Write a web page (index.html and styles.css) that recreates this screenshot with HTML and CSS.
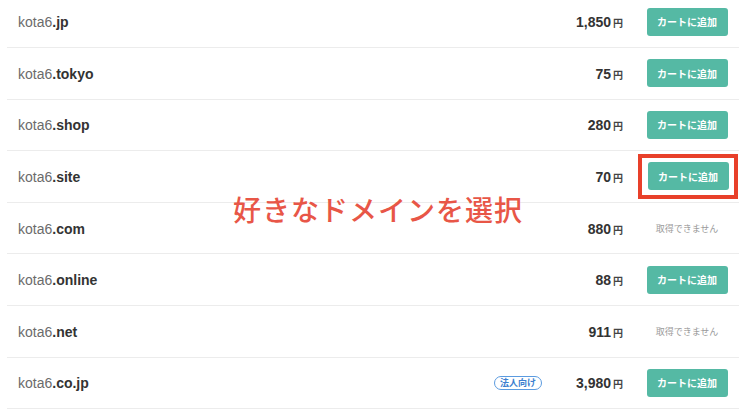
FILE: index.html
```html
<!DOCTYPE html>
<html lang="ja">
<head>
    <meta charset="UTF-8">
    <meta name="viewport" content="width=device-width, initial-scale=1.0">
    <title>ドメイン検索結果</title>
    <link rel="stylesheet" href="styles.css">
</head>
<body>
    <div class="result-list">
        <div class="row">
            <div class="domain">kota6<b>.jp</b></div>
            <div class="price">1,850<span class="yen">円</span></div>
            <div class="action"><button class="cart-btn">カートに追加</button></div>
        </div>
        <div class="row">
            <div class="domain">kota6<b>.tokyo</b></div>
            <div class="price">75<span class="yen">円</span></div>
            <div class="action"><button class="cart-btn">カートに追加</button></div>
        </div>
        <div class="row">
            <div class="domain">kota6<b>.shop</b></div>
            <div class="price">280<span class="yen">円</span></div>
            <div class="action"><button class="cart-btn">カートに追加</button></div>
        </div>
        <div class="row">
            <div class="domain">kota6<b>.site</b></div>
            <div class="price">70<span class="yen">円</span></div>
            <div class="action highlight"><button class="cart-btn">カートに追加</button></div>
        </div>
        <div class="row">
            <div class="domain">kota6<b>.com</b></div>
            <div class="price">880<span class="yen">円</span></div>
            <div class="action"><span class="unavailable">取得できません</span></div>
        </div>
        <div class="row">
            <div class="domain">kota6<b>.online</b></div>
            <div class="price">88<span class="yen">円</span></div>
            <div class="action"><button class="cart-btn">カートに追加</button></div>
        </div>
        <div class="row">
            <div class="domain">kota6<b>.net</b></div>
            <div class="price">911<span class="yen">円</span></div>
            <div class="action"><span class="unavailable">取得できません</span></div>
        </div>
        <div class="row">
            <div class="domain">kota6<b>.co.jp</b></div>
            <span class="badge">法人向け</span>
            <div class="price">3,980<span class="yen">円</span></div>
            <div class="action"><button class="cart-btn">カートに追加</button></div>
        </div>

        <div class="caption">好きなドメインを選択</div>
    </div>
</body>
</html>
```

FILE: styles.css
```css
body {
    margin: 0;
    background-color: #ffffff;
    font-family: "Liberation Sans", "Noto Sans CJK JP", sans-serif;
    overflow: hidden;
}

.result-list {
    position: relative;
    margin: -3.6px 11px 0 7px;
}

.row {
    display: flex;
    align-items: center;
    height: 51.6px;
    box-sizing: border-box;
    padding-left: 11px;
    border-bottom: 1px solid #ececec;
}

.domain {
    flex: 1;
    font-size: 14px;
    color: #6b6b6b;
    padding-top: 1px;
}

.domain b {
    color: #333333;
    font-weight: bold;
}

.badge {
    font-family: "Noto Sans CJK JP", sans-serif;
    font-size: 9px;
    font-weight: bold;
    color: #3d7fcf;
    border: 1px solid #5b9be0;
    border-radius: 8px;
    padding: 0 5px;
    line-height: 12px;
    margin-right: 34px;
    margin-top: 1px;
}

.price {
    font-size: 14px;
    font-weight: bold;
    color: #333333;
    text-align: right;
    padding-top: 1px;
}

.yen {
    font-family: "Noto Sans CJK JP", sans-serif;
    font-size: 10px;
    font-weight: bold;
    margin-left: 2px;
    color: #444444;
}

.action {
    width: 104px;
    margin-left: 12px;
    display: flex;
    justify-content: center;
    align-items: center;
}

.cart-btn {
    width: 81px;
    height: 28px;
    border: none;
    border-radius: 3px;
    background-color: #55b9a4;
    color: #ffffff;
    font-family: "Noto Sans CJK JP", sans-serif;
    font-size: 10px;
    font-weight: bold;
    padding: 0;
    cursor: pointer;
}

.highlight {
    box-sizing: border-box;
    width: 100px;
    height: 45px;
    margin-left: 15px;
    margin-right: 1px;
    border: 4px solid #e8402a;
}

.unavailable {
    font-family: "Noto Sans CJK JP", sans-serif;
    font-size: 9px;
    color: #9a9a9a;
}

.caption {
    position: absolute;
    left: 226px;
    top: 193px;
    font-family: "Noto Sans CJK JP", sans-serif;
    font-size: 28px;
    font-weight: 500;
    color: #e85647;
    letter-spacing: 1px;
}
```
